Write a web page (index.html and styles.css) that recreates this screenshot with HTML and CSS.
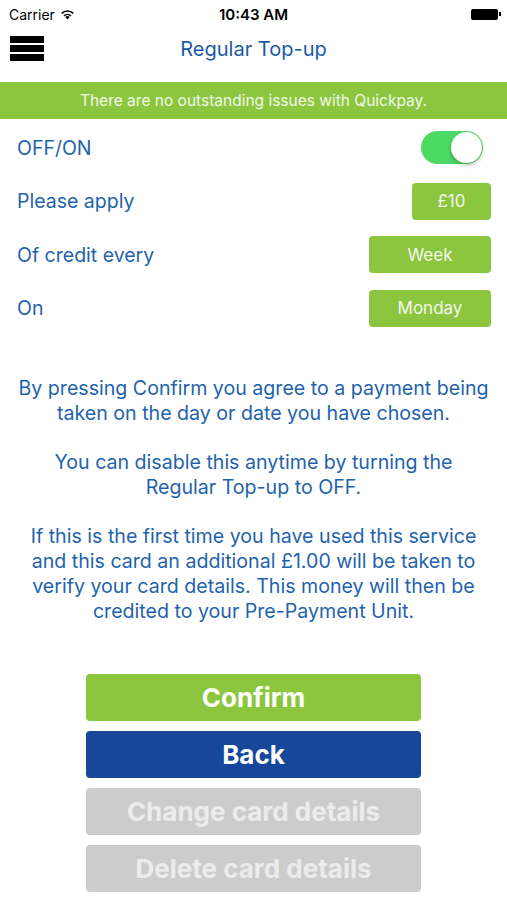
FILE: index.html
```html
<!DOCTYPE html>
<html lang="en">
<head>
  <meta charset="UTF-8" />
  <meta name="viewport" content="width=device-width, initial-scale=1.0"/>
  <title>Regular Top-up</title>
  <link rel="stylesheet" href="styles.css">
</head>
<body>

  <div class="status-bar">
    <div class="carrier">Carrier
      <svg class="wifi" width="15" height="11" viewBox="0 0 15 11">
        <path d="M7.5 10.5 L5.3 8.1 A3.2 3.2 0 0 1 9.7 8.1 Z" fill="#000"/>
        <path d="M3.6 6.3 A5.6 5.6 0 0 1 11.4 6.3 L10.3 7.4 A4.1 4.1 0 0 0 4.7 7.4 Z" fill="#000"/>
        <path d="M1.2 3.8 A9 9 0 0 1 13.8 3.8 L12.7 4.9 A7.5 7.5 0 0 0 2.3 4.9 Z" fill="#000"/>
      </svg>
    </div>
    <div class="clock">10:43 AM</div>
    <div class="battery"><span class="battery-body"></span><span class="battery-tip"></span></div>
  </div>

  <div class="nav-bar">
    <div class="menu-icon">
      <span></span><span></span><span></span>
    </div>
    <h1>Regular Top-up</h1>
  </div>

  <div class="notice">There are no outstanding issues with Quickpay.</div>

  <div class="settings">
    <div class="row">
      <span class="label">OFF/ON</span>
      <div class="toggle"><span class="knob"></span></div>
    </div>
    <div class="row">
      <span class="label">Please apply</span>
      <button class="pick pick-small">£10</button>
    </div>
    <div class="row">
      <span class="label">Of credit every</span>
      <button class="pick">Week</button>
    </div>
    <div class="row">
      <span class="label">On</span>
      <button class="pick">Monday</button>
    </div>
  </div>

  <div class="info">
    <p>By pressing Confirm you agree to a payment being<br>taken on the day or date you have chosen.</p>
    <p>You can disable this anytime by turning the<br>Regular Top-up to OFF.</p>
    <p>If this is the first time you have used this service<br>and this card an additional £1.00 will be taken to<br>verify your card details. This money will then be<br>credited to your Pre-Payment Unit.</p>
  </div>

  <div class="actions">
    <button class="btn btn-confirm">Confirm</button>
    <button class="btn btn-back">Back</button>
    <button class="btn btn-off">Change card details</button>
    <button class="btn btn-off">Delete card details</button>
  </div>

</body>
</html>
```

FILE: styles.css
```css
body {
  margin: 0;
  font-family: 'Inter', 'Liberation Sans', sans-serif;
  background-color: #ffffff;
  color: #1f63ad;
}
.status-bar {
  display: flex;
  justify-content: space-between;
  align-items: center;
  height: 28px;
  padding: 0 6px 0 9px;
  color: #000;
  font-size: 14px;
  position: relative;
}
.carrier {
  display: flex;
  align-items: center;
  gap: 5px;
}
.clock {
  position: absolute;
  left: 0;
  right: 0;
  text-align: center;
  font-weight: 600;
  font-size: 15px;
}
.battery {
  display: flex;
  align-items: center;
}
.battery-body {
  width: 27px;
  height: 11px;
  background-color: #000;
  border-radius: 2px;
}
.battery-tip {
  width: 2px;
  height: 4px;
  background-color: #000;
  margin-left: 1px;
}
.nav-bar {
  position: relative;
  height: 53px;
  display: flex;
  align-items: center;
  justify-content: center;
}
.nav-bar h1 {
  margin: 0 0 12px;
  font-size: 20px;
  font-weight: 400;
  color: #1a5aa8;
}
.menu-icon {
  position: absolute;
  left: 10px;
  top: 8px;
  display: flex;
  flex-direction: column;
  gap: 2px;
}
.menu-icon span {
  display: block;
  width: 34px;
  height: 7px;
  background-color: #000;
}
.notice {
  background-color: #8cc63f;
  color: #f2f8e8;
  text-align: center;
  font-size: 15.5px;
  height: 37px;
  line-height: 37px;
  margin-top: 1px;
}
.settings {
  padding: 2px 16px 0 17px;
}
.row {
  display: flex;
  justify-content: space-between;
  align-items: center;
  height: 53.5px;
}
.label {
  font-size: 19.5px;
}
.toggle {
  width: 62px;
  height: 33px;
  border-radius: 17px;
  background-color: #4cd964;
  position: relative;
  margin-right: 8px;
}
.knob {
  position: absolute;
  right: 1px;
  top: 1px;
  width: 31px;
  height: 31px;
  border-radius: 50%;
  background-color: #fff;
  box-shadow: 0 2px 4px rgba(0, 0, 0, 0.25);
}
.pick {
  width: 122px;
  height: 37px;
  border: none;
  border-radius: 4px;
  background-color: #8cc63f;
  color: #f4f9ec;
  font-family: inherit;
  font-size: 17px;
  padding: 0;
}
.pick-small {
  width: 79px;
}
.info {
  padding: 41px 0 0;
  text-align: center;
  font-size: 19.6px;
  line-height: 25px;
}
.info p {
  margin: 0 0 24px;
}
.actions {
  display: flex;
  flex-direction: column;
  align-items: center;
  gap: 10px;
  margin-top: 50px;
}
.btn {
  width: 335px;
  height: 47px;
  border: none;
  border-radius: 4px;
  color: #fff;
  font-family: inherit;
  font-size: 26px;
  font-weight: 700;
  padding: 0;
}
.btn-confirm {
  background-color: #8cc63f;
}
.btn-back {
  background-color: #16479a;
}
.btn-off {
  background-color: #cccccc;
  color: #ececec;
}
```
